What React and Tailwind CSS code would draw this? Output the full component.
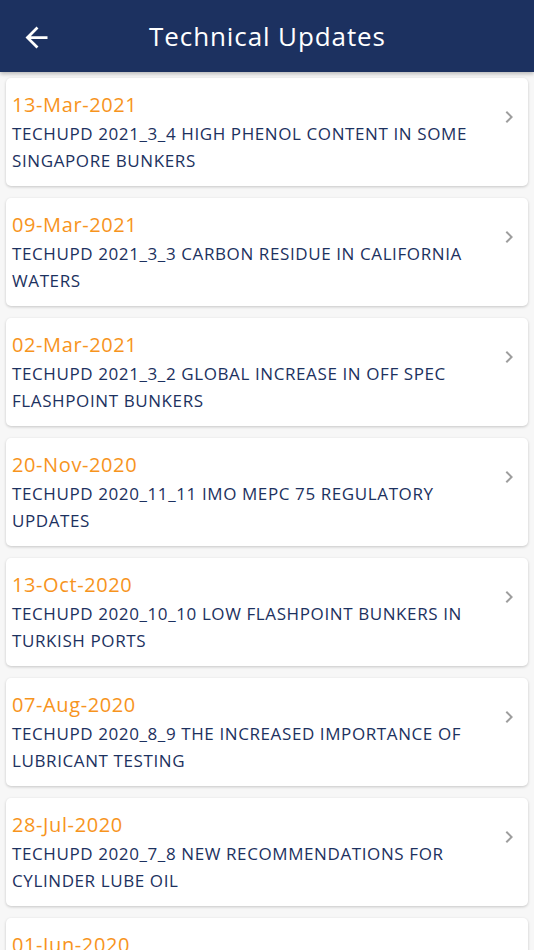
import React from "react";

const items = [
  ["13-Mar-2021", "TECHUPD 2021_3_4 HIGH PHENOL CONTENT IN SOME SINGAPORE BUNKERS"],
  ["09-Mar-2021", "TECHUPD 2021_3_3 CARBON RESIDUE IN CALIFORNIA WATERS"],
  ["02-Mar-2021", "TECHUPD 2021_3_2 GLOBAL INCREASE IN OFF SPEC FLASHPOINT BUNKERS"],
  ["20-Nov-2020", "TECHUPD 2020_11_11 IMO MEPC 75 REGULATORY UPDATES"],
  ["13-Oct-2020", "TECHUPD 2020_10_10 LOW FLASHPOINT BUNKERS IN TURKISH PORTS"],
  ["07-Aug-2020", "TECHUPD 2020_8_9 THE INCREASED IMPORTANCE OF LUBRICANT TESTING"],
  ["28-Jul-2020", "TECHUPD 2020_7_8 NEW RECOMMENDATIONS FOR CYLINDER LUBE OIL"],
  ["01-Jun-2020", "TECHUPD 2020_6_7 UPDATE ON BUNKER QUALITY"],
];

function Chevron() {
  return (
    <svg width="24" height="24" viewBox="0 0 24 24" className="shrink-0 mt-[27px] mr-[7px]">
      <path d="M10 6 8.59 7.41 13.17 12l-4.58 4.59L10 18l6-6z" fill="#9e9e9e" />
    </svg>
  );
}

export default function App() {
  return (
    <div
      className="w-[534px] h-[950px] overflow-hidden bg-[#f7f7f7] relative"
      style={{ fontFamily: "'Open Sans', sans-serif" }}
    >
      <div className="h-[72px] bg-[#1c3160] flex items-center relative z-10 shadow-[0_2px_4px_rgba(0,0,0,0.25)]">
        <svg width="33" height="33" viewBox="0 0 24 24" className="ml-[20px] mt-[2px] shrink-0">
          <path d="M20 11H7.83l5.59-5.59L12 4l-8 8 8 8 1.41-1.41L7.83 13H20v-2z" fill="#ffffff" />
        </svg>
        <div className="absolute inset-0 flex items-center justify-center pointer-events-none">
          <span className="text-white text-[26px] tracking-[0.9px] pl-[1px]">Technical Updates</span>
        </div>
      </div>
      <div className="flex flex-col gap-[12px] pt-[6px] px-[6px]">
        {items.map(([d, t]) => (
          <div
            key={d}
            className="bg-white rounded-[5px] shadow-[0_1px_3px_rgba(0,0,0,0.2)] flex items-start"
          >
            <div className="flex-1 pl-[6px] pt-[12px] pb-[12px] pr-[20px]">
              <div className="text-[#f7941d] text-[20px] leading-[30px] tracking-[0.6px]">{d}</div>
              <div className="text-[#1c3160] text-[17px] leading-[27px] tracking-[0.6px]">{t}</div>
            </div>
            <Chevron />
          </div>
        ))}
      </div>
    </div>
  );
}
